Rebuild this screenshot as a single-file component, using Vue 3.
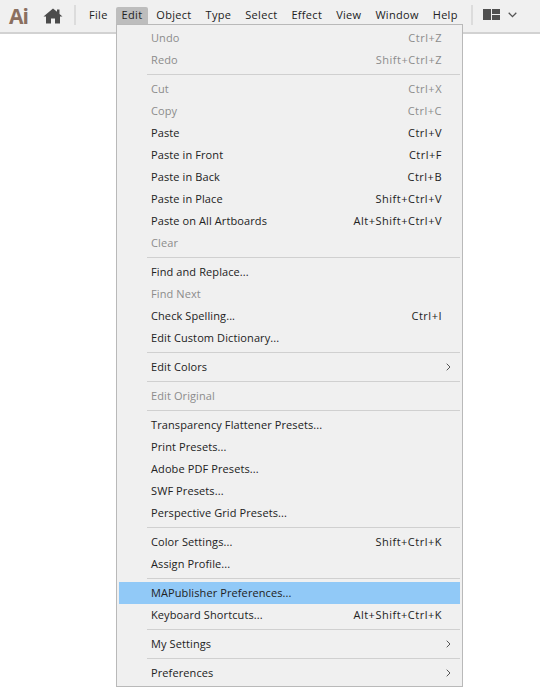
<script setup>
const groups = [
  [
    { t: 'Undo', k: 'Ctrl+Z', d: 1 },
    { t: 'Redo', k: 'Shift+Ctrl+Z', d: 1 }
  ],
  [
    { t: 'Cut', k: 'Ctrl+X', d: 1 },
    { t: 'Copy', k: 'Ctrl+C', d: 1 },
    { t: 'Paste', k: 'Ctrl+V' },
    { t: 'Paste in Front', k: 'Ctrl+F' },
    { t: 'Paste in Back', k: 'Ctrl+B' },
    { t: 'Paste in Place', k: 'Shift+Ctrl+V' },
    { t: 'Paste on All Artboards', k: 'Alt+Shift+Ctrl+V' },
    { t: 'Clear', d: 1 }
  ],
  [
    { t: 'Find and Replace...' },
    { t: 'Find Next', d: 1 },
    { t: 'Check Spelling...', k: 'Ctrl+I' },
    { t: 'Edit Custom Dictionary...' }
  ],
  [{ t: 'Edit Colors', sub: 1 }],
  [{ t: 'Edit Original', d: 1 }],
  [
    { t: 'Transparency Flattener Presets...' },
    { t: 'Print Presets...' },
    { t: 'Adobe PDF Presets...' },
    { t: 'SWF Presets...' },
    { t: 'Perspective Grid Presets...' }
  ],
  [
    { t: 'Color Settings...', k: 'Shift+Ctrl+K' },
    { t: 'Assign Profile...' }
  ],
  [
    { t: 'MAPublisher Preferences...', hi: 1 },
    { t: 'Keyboard Shortcuts...', k: 'Alt+Shift+Ctrl+K' }
  ],
  [{ t: 'My Settings', sub: 1 }],
  [{ t: 'Preferences', sub: 1 }]
]
const menus = ['File', 'Edit', 'Object', 'Type', 'Select', 'Effect', 'View', 'Window', 'Help']
</script>

<template>
  <div class="app">
    <header class="bar">
      <span class="logo">Ai</span>
      <svg class="home" width="20" height="16" viewBox="0 0 20 16">
        <path d="M10 0.5 L14 3.8 V1.5 H16.5 V5.9 L19.5 8.5 H17 V15.5 H12 V10.5 H8 V15.5 H3 V8.5 H0.5 Z" fill="#4b4b4b" />
      </svg>
      <span class="vsep first"></span>
      <nav class="menus">
        <span v-for="m in menus" :key="m" class="menu" :class="{ open: m === 'Edit' }">{{ m }}</span>
      </nav>
      <span class="vsep second"></span>
      <svg class="layout" width="17" height="11" viewBox="0 0 17 11">
        <path d="M0 0H8V11H0Z M9 0H17V5H9Z M9 6H17V11H9Z" fill="#505050" />
      </svg>
      <svg class="chev" width="9" height="6" viewBox="0 0 9 6">
        <path d="M0.7 0.8 L4.5 4.6 L8.3 0.8" fill="none" stroke="#555" stroke-width="1.3" />
      </svg>
    </header>
    <div class="canvas">
      <div class="popup">
        <template v-for="(g, i) in groups" :key="i">
          <div v-if="i" class="sep"></div>
          <div v-for="r in g" :key="r.t" class="row" :class="{ dis: r.d, hi: r.hi }">
            <span class="label">{{ r.t }}</span>
            <span v-if="r.k" class="keys">{{ r.k }}</span>
            <svg v-if="r.sub" class="arrow" width="5" height="8" viewBox="0 0 5 8">
              <path d="M0.7 0.7 L4 4 L0.7 7.3" fill="none" stroke="#555" stroke-width="1" />
            </svg>
          </div>
        </template>
      </div>
    </div>
  </div>
</template>

<style>
html, body { margin: 0; background: #fff; }
</style>

<style scoped>
.app {
  width: 540px;
  height: 687px;
  overflow: hidden;
  font-family: "Open Sans", "Noto Sans", sans-serif;
  font-size: 11px;
  color: #222;
  background: #fff;
}
.bar {
  height: 32px;
  background: #f0f0f0;
  border-bottom: 2px solid #d2d2d2;
  display: flex;
  align-items: center;
  box-sizing: content-box;
}
.logo {
  font-weight: 700;
  font-size: 21px;
  letter-spacing: -1px;
  color: #8a6f60;
  margin-left: 9px;
  width: 34px;
  line-height: 28px;
}
.home { margin-top: -1px; }
.vsep { width: 2px; height: 20px; background: #dcdcdc; margin-top: -3px; }
.vsep.first { margin-left: 11px; }
.menus { display: flex; height: 24px; align-self: flex-start; margin-top: 7px; margin-left: 6px; }
.menu { padding: 0 7px; line-height: 16px; height: 17px; letter-spacing: 0.3px; border-radius: 2px 2px 0 0; }
.menu.open { background: #bdbdbd; padding: 0 6px; margin: 0 1px; }
.vsep.second { margin-left: 6px; }
.layout { margin-left: 10px; margin-top: -4px; }
.chev { margin-left: 8px; margin-top: -3px; }
.canvas { position: relative; }
.popup {
  position: absolute;
  left: 116px;
  top: -10px;
  width: 341px;
  background: #f0f0f0;
  border: 1px solid #b9b9b9;
  padding: 2px;
  box-sizing: content-box;
}
.row {
  height: 22px;
  box-sizing: border-box;
  display: flex;
  align-items: center;
  padding: 0 18px 1px 32px;
  justify-content: space-between;
  letter-spacing: 0.1px;
}
.keys { letter-spacing: 0.5px; }
.dis { color: #8c8c8c; }
.hi { background: #91c9f7; }
.arrow { margin-right: -9px; }
.sep {
  height: 1px;
  margin: 3px 0 3px 28px;
  background: #d0d0d0;
}
</style>
